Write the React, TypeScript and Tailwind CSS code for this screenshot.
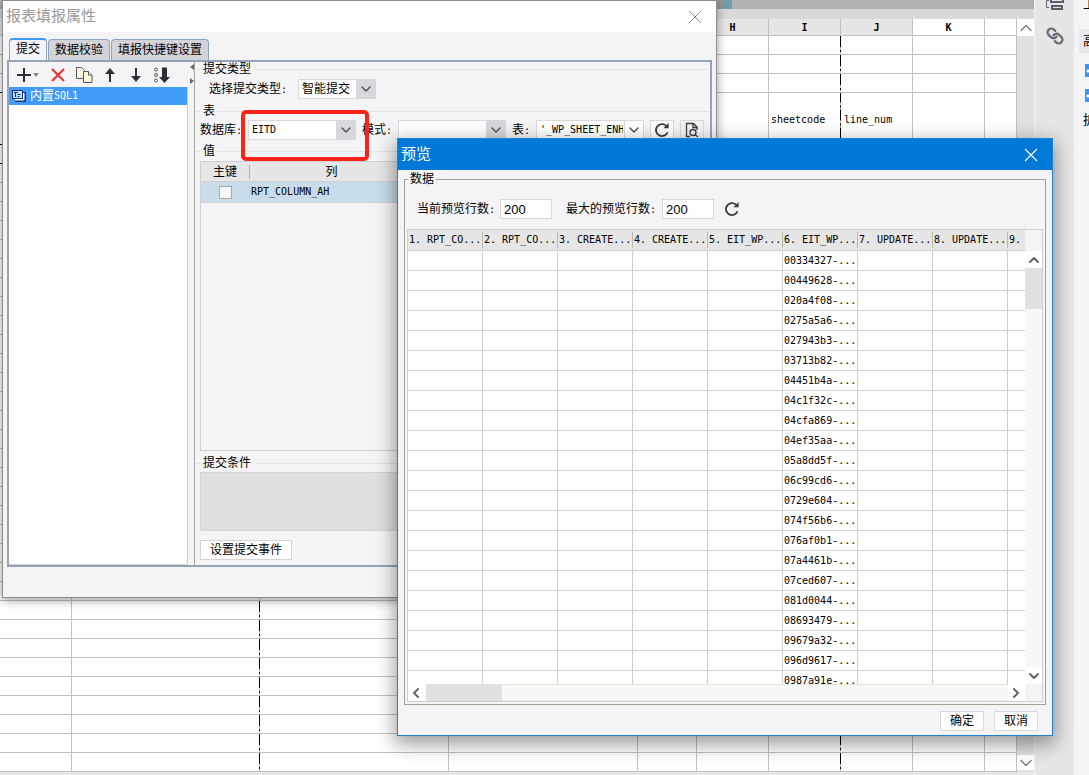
import type { ReactNode } from "react";
import { ChevronDown, ChevronLeft, ChevronRight, ChevronUp, Link } from "lucide-react";

const previewColumns = [
  "1. RPT_CO...",
  "2. RPT_CO...",
  "3. CREATE...",
  "4. CREATE...",
  "5. EIT_WP...",
  "6. EIT_WP...",
  "7. UPDATE...",
  "8. UPDATE...",
  "9.",
];

const previewIds = [
  "00334327", "00449628", "020a4f08", "0275a5a6", "027943b3", "03713b82", "04451b4a", "04c1f32c",
  "04cfa869", "04ef35aa", "05a8dd5f", "06c99cd6", "0729e604", "074f56b6", "076af0b1", "07a4461b",
  "07ced607", "081d0044", "08693479", "09679a32", "096d9617", "0987a91e",
];

const sheetColumns = ["", "", "", "", "", "H", "I", "J", "K", ""];
const sheetRows = [
  ...Array(3).fill("short"),
  "tall",
  ...Array(33).fill("short"),
];

function RefreshIcon() {
  return (
    <svg viewBox="0 0 16 16" className="h-4 w-4" fill="none" stroke="#3c3c40" strokeWidth="1.8">
      <path d="M13.6 10.2A6 6 0 1 1 12 3.6l1.2 1" />
      <path d="M14.6 1v5.2H9.4z" fill="#3c3c40" stroke="none" />
    </svg>
  );
}

function SheetCell({ row, column }: { row: number; column: number }) {
  // page break lines sit on the right of the 2nd and 7th columns
  const pageBreak = column === 1 || column === 6;
  const underlined = column === 0 && row >= 2 && row <= 4;
  let style = "border-r border-b border-[#c0c0c0] p-0 pt-0.5 pl-[3px]";
  if (pageBreak) {
    style =
      "border-b border-[#c0c0c0] bg-[linear-gradient(#000_0_11px,#c0c0c0_11px_14px,#000_14px_16px,#c0c0c0_16px)] bg-right bg-repeat-y p-0 pt-0.5 pl-0.5 [background-size:1px_18px]";
  }
  if (underlined) {
    style = "border-r border-b border-r-[#c0c0c0] border-b-black p-0";
  }
  return (
    <td className={style}>
      {row === 3 && column === 6 && "sheetcode"}
      {row === 3 && column === 7 && "line_num"}
    </td>
  );
}

function Sheet() {
  return (
    <div className="flex min-w-0 flex-1 flex-col">
      <div className="flex h-[9px] shrink-0 bg-[#b1b1b1] pl-[717px]">
        <div className="w-[6px] bg-[#999999]" />
        <div className="w-[9px] bg-[#6f9eaa]" />
      </div>
      <div className="h-[10px] shrink-0 bg-[#d9d9dc]" />
      <div className="flex min-h-0 flex-1">
        <div className="min-w-0 flex-1 overflow-hidden">
          <table className="w-full table-fixed border-separate border-spacing-0 font-['DejaVu_Sans_Mono','Noto_Sans_CJK_SC',monospace] text-[10px] leading-3">
            <colgroup>
              <col className="w-[72px]" />
              <col className="w-[188px]" />
              <col className="w-[189px]" />
              <col className="w-[189px]" />
              <col className="w-[59px]" />
              <col className="w-[72px]" />
              <col className="w-[72px]" />
              <col className="w-[72px]" />
              <col className="w-[72px]" />
              <col />
            </colgroup>
            <thead>
              <tr className="h-[17px]">
                {sheetColumns.map((name, i) => (
                  <th
                    key={i}
                    className={
                      i < 8
                        ? "border-r border-b border-[#c0c0c0] bg-[#e6e6e6] p-0 pt-px"
                        : "border-r border-b border-[#c0c0c0] bg-white p-0 pt-px"
                    }
                  >
                    {name}
                  </th>
                ))}
              </tr>
            </thead>
            <tbody>
              {sheetRows.map((kind, r) => (
                <tr key={r} className={kind === "tall" ? "h-[52px]" : "h-[19px]"}>
                  {sheetColumns.map((_, c) => (
                    <SheetCell key={c} row={r} column={c} />
                  ))}
                </tr>
              ))}
            </tbody>
          </table>
        </div>
        <div className="flex w-[17px] flex-col bg-[#e0e0e2] pb-0.5">
          <div className="flex h-[17px] items-center justify-center bg-white">
            <ChevronUp className="h-5 w-5 shrink-0 text-[#777]" strokeWidth={1.5} />
          </div>
          <div className="flex-1" />
          <div className="flex h-[15px] items-center justify-center bg-white">
            <ChevronDown className="h-5 w-5 shrink-0 text-[#777]" strokeWidth={1.5} />
          </div>
        </div>
      </div>
      <div className="h-[3px] shrink-0 bg-[#e6e6e8]" />
    </div>
  );
}

function SideBar() {
  return (
    <>
      <div className="flex w-10 shrink-0 flex-col items-center gap-4 border-l border-[#f4f4f4] bg-[#e6e6e6]">
        <svg viewBox="0 0 18 11" className="h-[11px] w-[18px]" fill="none" stroke="#5c5f68" strokeWidth="2">
          <path d="M5 0v2h12V0M6 6h10v3H6z" />
          <path d="M3 .5H.5v7H3" strokeWidth="1" />
        </svg>
        <Link className="h-[18px] w-[18px] -scale-x-100 text-[#696c74]" strokeWidth={3} />
      </div>
      <div className="flex w-[15px] shrink-0 flex-col overflow-hidden bg-[#f4f4f7] pl-[5px] text-[13px]">
        <div className="h-[29px] pl-1 leading-[8px]">上</div>
        <div className="h-6 bg-[#e9e9eb] pl-1 leading-6">高</div>
        <div className="flex flex-col gap-3 pt-[11px] pl-1.5">
          <input type="checkbox" defaultChecked aria-label="选项一" className="h-[13px] w-[13px] shrink-0 appearance-none bg-[#3a96f5] bg-[radial-gradient(circle_at_3px_7px,#fff_1px,transparent_2px)]" />
          <input type="checkbox" defaultChecked aria-label="选项二" className="h-[13px] w-[13px] shrink-0 appearance-none bg-[#3a96f5] bg-[radial-gradient(circle_at_3px_7px,#fff_1px,transparent_2px)]" />
        </div>
        <div className="pt-2 pl-1 leading-5">扩</div>
      </div>
    </>
  );
}

function GroupTitle({ children }: { children: ReactNode }) {
  return (
    <div className="-mx-[3px] flex h-[14px] shrink-0 items-center gap-0.5 whitespace-nowrap leading-[14px]">
      <span className="h-px w-1 bg-[#e4e4e7]" />
      {children}
      <span className="h-px flex-1 bg-[#e4e4e7]" />
    </div>
  );
}

function Colon() {
  return <span className="text-[10px]">:</span>;
}

function Select({ id, value, plain, narrow }: { id: string; value: string; plain?: boolean; narrow?: boolean }) {
  return (
    <div className={narrow ? "relative h-5 w-[78px]" : "relative h-5 w-[108px] text-[10px]"}>
      <select id={id} className="h-5 w-full appearance-none rounded-none border border-[#d9d9dc] bg-white py-0 pr-5 pl-[3px] outline-none">
        <option>{value}</option>
      </select>
      <span
        className={
          plain
            ? "pointer-events-none absolute top-0 right-0 flex h-5 w-5 items-center justify-center border border-[#d9d9dc] bg-white"
            : "pointer-events-none absolute top-0 right-0 flex h-5 w-5 items-center justify-center bg-[#d7d8db]"
        }
      >
        <ChevronDown className="h-4 w-4 shrink-0 text-[#4b4b4f]" strokeWidth={2} />
      </span>
    </div>
  );
}

function ToolBar() {
  return (
    <div className="flex h-[25px] items-center gap-[9px] pl-2 text-[#2f2f33]">
      <button aria-label="添加" className="flex items-center gap-0.5">
        <svg viewBox="0 0 14 14" className="h-[14px] w-[14px]" stroke="currentColor" strokeWidth="2">
          <path d="M7 0v14M0 7h14" />
        </svg>
        <svg viewBox="0 0 6 4" className="h-1 w-1.5" fill="#8a8a8a">
          <path d="M0 0h6L3 4z" />
        </svg>
      </button>
      <button aria-label="删除" className="ml-[3px]">
        <svg viewBox="0 0 14 14" className="h-[14px] w-[14px]" stroke="#e8392f" strokeWidth="2.2">
          <path d="M1 1l12 12M13 1L1 13" />
        </svg>
      </button>
      <button aria-label="复制" className="ml-0.5">
        <svg viewBox="0 0 17 16" className="h-4 w-[17px]" fill="#fdf6dc" stroke="#55565c">
          <path d="M.5.5h5l3 3v8h-8z" />
          <path d="M7.500 4.500h5l3.500 3.500v7.500H7.500z" />
          <path d="M12.500 4.500v3.500h3.500" />
        </svg>
      </button>
      <button aria-label="上移" className="ml-0.5">
        <svg viewBox="0 0 12 14" className="h-[14px] w-3">
          <path d="M6 4v10" stroke="currentColor" strokeWidth="2" />
          <path d="M6 0l5 6H1z" fill="currentColor" />
        </svg>
      </button>
      <button aria-label="下移" className="ml-[5px]">
        <svg viewBox="0 0 12 14" className="h-[14px] w-3">
          <path d="M6 0v10" stroke="currentColor" strokeWidth="2" />
          <path d="M6 14l5-6H1z" fill="currentColor" />
        </svg>
      </button>
      <button aria-label="排序" className="ml-[3px]">
        <svg viewBox="0 0 16 16" className="h-4 w-4">
          <g fill="none" stroke="#55565c">
            <circle cx="2" cy="2.500" r="1.500" />
            <circle cx="2" cy="8" r="1.500" />
            <circle cx="2" cy="13.500" r="1.500" />
          </g>
          <path d="M8 .5h5V10h3l-5.500 6L5 10h3z" fill="currentColor" />
        </svg>
      </button>
    </div>
  );
}

function PropertyWindow() {
  return (
    <div className="absolute top-0 left-[2px] w-[715px] border border-[#8c8c8c] bg-[#f4f4f7] shadow-[0_2px_10px_rgba(0,0,0,0.4)]">
      <div className="flex h-[31px] items-center justify-between bg-white pr-3.5 pl-[3px]">
        <h1 className="text-[15px] text-[#999]">报表填报属性</h1>
        <button aria-label="关闭">
          <svg viewBox="0 0 14 14" className="h-[14px] w-[14px]" stroke="#8c8c8c">
            <path d="M1 1l12 12M13 1L1 13" />
          </svg>
        </button>
      </div>
      <div className="px-1 pt-1.5 pb-[30px]">
        <div className="flex h-[22px] items-end gap-px pl-0.5">
          <button className="h-[22px] w-[38px] rounded-t-sm border border-t-2 border-b-0 border-[#8ea2bc] border-t-[#3f96f5] bg-[#f4f4f7] pb-0.5 leading-4">提交</button>
          <button className="h-[21px] w-[62px] rounded-t-sm border border-b-0 border-[#8ea2bc] bg-[#d3d3d8] leading-4">数据校验</button>
          <button className="h-[21px] w-[98px] rounded-t-sm border border-b-0 border-[#8ea2bc] bg-[#d3d3d8] leading-4">填报快捷键设置</button>
        </div>
        <div className="flex border-2 border-[#94a3b8]">
          <div className="flex w-[179px] shrink-0 flex-col">
            <ToolBar />
            <ul className="flex-1 border-r border-b border-[#d0d0d3] bg-white">
              <li className="flex h-[18px] items-center bg-[#419bf9] pl-[3px] leading-4 text-white">
                <svg viewBox="0 0 14 12" className="mr-1 h-3 w-[14px]">
                  <path d="M3 2h11v10H3z" fill="#12357c" />
                  <path d="M3 3h9.500v7.500H3z" fill="#fff" />
                  <path d="M0 0h11v9H0z" fill="#12357c" />
                  <path d="M1 1h9v7H1z" fill="#c3dcf7" />
                  <path d="M2 2.500h4M3.500 2.500V7M5.500 4.500h3M5.500 6.500h2" stroke="#12357c" />
                </svg>
                内置<span className="text-[10px]">SQL1</span>
              </li>
            </ul>
          </div>
          <div className="flex w-[7px] shrink-0 flex-col gap-2 border-r border-[#a5a5a0] pt-0.5 pl-0.5">
            <svg viewBox="0 0 4 6" className="h-1.5 w-1" fill="#666">
              <path d="M4 0v6L0 3z" />
            </svg>
            <svg viewBox="0 0 4 6" className="h-1.5 w-1" fill="#666">
              <path d="M0 0v6l4-3z" />
            </svg>
          </div>
          <div className="flex min-w-0 flex-1 flex-col px-[5px] pb-[5px]">
            <GroupTitle>提交类型</GroupTitle>
            <div className="mt-[3px] flex items-center pl-[9px]">
              <label htmlFor="submitType" className="w-[89px]">选择提交类型<Colon /></label>
              <Select id="submitType" value="智能提交" narrow />
            </div>
            <div className="mt-[5px]">
              <GroupTitle>表</GroupTitle>
            </div>
            <div className="mt-0.5 flex items-center whitespace-nowrap">
              <label htmlFor="database" className="w-12">数据库<Colon /></label>
              <Select id="database" value="EITD" />
              <label htmlFor="schema" className="ml-1.5 w-9">模式<Colon /></label>
              <Select id="schema" value="" />
              <label htmlFor="table" className="ml-1.5 w-6">表<Colon /></label>
              <Select id="table" value="'_WP_SHEET_ENH" plain />
              <button aria-label="刷新" className="ml-1.5 flex h-5 w-6 items-center justify-center border border-[#d9d9dc] bg-white">
                <RefreshIcon />
              </button>
              <button aria-label="预览" className="ml-1.5 flex h-5 w-6 items-center justify-center border border-[#d9d9dc]">
                <svg viewBox="0 0 14 16" className="h-4 w-[14px]" fill="none" stroke="#3c3c40" strokeWidth="1.3">
                  <path d="M5 14.500H1.500V1.500h7l3.500 3.500v3M8 1.500v4h4" />
                  <circle cx="8" cy="10.500" r="3" />
                  <path d="M10.200 12.700l2.800 2.300" />
                </svg>
              </button>
            </div>
            <div className="mt-1">
              <GroupTitle>值</GroupTitle>
            </div>
            <div className="mt-[3px] h-[290px] border border-[#d0d0d3]">
              <table className="w-full table-fixed border-separate border-spacing-0">
                <colgroup>
                  <col className="w-[49px]" />
                  <col className="w-[163px]" />
                  <col />
                </colgroup>
                <thead>
                  <tr className="h-5 bg-[#e6e6e6]">
                    <th className="border-b border-[#d0d0d3] p-0 font-normal">
                      <div className="border-r border-[#b5b5a8] leading-[14px]">主键</div>
                    </th>
                    <th className="border-b border-[#d0d0d3] p-0 font-normal">列</th>
                    <th className="border-b border-[#d0d0d3] p-0 font-normal">值</th>
                  </tr>
                </thead>
                <tbody>
                  <tr className="h-[21px] bg-[#c8dce9]">
                    <td className="border-r border-b border-[#d0d0d3] p-0">
                      <input type="checkbox" aria-label="主键" className="mx-auto block h-[13px] w-[13px] appearance-none border border-[#a8a8a8] bg-[#f7f7f7]" />
                    </td>
                    <td className="border-b border-[#d0d0d3] p-0 pl-px font-['DejaVu_Sans_Mono',monospace] text-[10px]">RPT_COLUMN_AH</td>
                    <td className="border-b border-[#d0d0d3] p-0" />
                  </tr>
                </tbody>
              </table>
            </div>
            <div className="mt-[5px]">
              <GroupTitle>提交条件</GroupTitle>
            </div>
            <div className="mt-0.5 h-[59px] border border-[#d4d4d6] bg-[#dfdfe1]" />
            <button className="mt-[9px] h-5 w-[92px] border border-[#d4d4d6] bg-white leading-4">设置提交事件</button>
          </div>
        </div>
      </div>
      <div className="pointer-events-none absolute top-[109px] left-[238px] h-[51px] w-32 rounded-[5px] border-4 border-[#fc2418]" />
    </div>
  );
}

function PreviewWindow() {
  return (
    <div className="absolute top-[138px] left-[397px] w-[656px] border border-[#1883d7] bg-[#f4f4f7] shadow-[0_6px_18px_2px_rgba(0,0,0,0.4)]">
      <div className="flex h-[31px] items-center justify-between bg-[#0078d7] pr-3.5 pl-[3px] text-white">
        <h2 className="text-[15px]">预览</h2>
        <button aria-label="关闭">
          <svg viewBox="0 0 14 14" className="h-[14px] w-[14px]" stroke="currentColor" strokeWidth="1.2">
            <path d="M1 1l12 12M13 1L1 13" />
          </svg>
        </button>
      </div>
      <div className="px-1.5 pt-0.5">
        <fieldset className="min-w-0 border border-[#a09f94] px-0.5 pb-0.5">
          <legend className="ml-px h-[14px] px-0.5 leading-[14px]">数据</legend>
          <div className="mt-[13px] flex h-5 items-center pl-2.5">
            <label htmlFor="currentRows" className="w-[83px]">当前预览行数<Colon /></label>
            <input id="currentRows" defaultValue="200" className="h-5 w-[52px] border border-[#d9d9dc] bg-white px-[3px] font-['Liberation_Sans',sans-serif] text-[13px]" />
            <label htmlFor="maxRows" className="ml-3.5 w-24">最大的预览行数<Colon /></label>
            <input id="maxRows" defaultValue="200" className="h-5 w-[52px] border border-[#d9d9dc] bg-white px-[3px] font-['Liberation_Sans',sans-serif] text-[13px]" />
            <button aria-label="刷新" className="ml-2.5">
              <RefreshIcon />
            </button>
          </div>
          <div className="mt-2.5 border border-[#cfcfd2]">
            <div className="flex h-[454px]">
              <div className="min-w-0 flex-1 overflow-hidden bg-white">
                <table className="w-[675px] table-fixed border-separate border-spacing-0 font-['DejaVu_Sans_Mono',monospace] text-[10px] whitespace-nowrap">
                  <thead>
                    <tr className="h-[21px] bg-[#e6e6e6]">
                      {previewColumns.map((name) => (
                        <th key={name} className="border-b border-[#d0d0d0] p-0 text-left font-normal">
                          <div className="border-r border-[#bcb9a4] pl-px leading-4">{name}</div>
                        </th>
                      ))}
                    </tr>
                  </thead>
                  <tbody>
                    {previewIds.map((id) => (
                      <tr key={id} className="h-5">
                        {previewColumns.map((name, c) => (
                          <td key={name} className="border-r border-b border-[#d0d0d0] p-0 pl-px leading-4">
                            {c === 5 && `${id}-...`}
                          </td>
                        ))}
                      </tr>
                    ))}
                  </tbody>
                </table>
              </div>
              <div className="flex w-[17px] flex-col bg-[#f8f8f6]">
                <div className="h-[21px] bg-[#f4f4f7]" />
                <div className="flex h-[17px] items-center justify-center bg-white">
                  <ChevronUp className="h-4 w-4 shrink-0 text-[#666]" strokeWidth={3} />
                </div>
                <div className="h-[41px] bg-[#e1e1e1]" />
                <div className="flex-1" />
                <div className="flex h-[17px] items-center justify-center bg-white">
                  <ChevronDown className="h-4 w-4 shrink-0 text-[#666]" strokeWidth={3} />
                </div>
              </div>
            </div>
            <div className="flex h-[17px] pr-[17px]">
              <div className="flex w-[18px] items-center bg-white">
                <ChevronLeft className="h-4 w-4 shrink-0 text-[#666]" strokeWidth={3} />
              </div>
              <div className="w-[76px] bg-[#e1e1e1]" />
              <div className="flex-1 border-y border-[#e8e6d8] bg-[#f8f8f6]" />
              <div className="flex w-[17px] items-center bg-white">
                <ChevronRight className="h-4 w-4 shrink-0 text-[#666]" strokeWidth={3} />
              </div>
            </div>
          </div>
        </fieldset>
      </div>
      <div className="flex justify-end gap-2.5 pt-1.5 pr-3.5 pb-1">
        <button className="h-5 w-11 border border-[#d9d9dc] bg-white leading-4">确定</button>
        <button className="h-5 w-11 border border-[#d9d9dc] bg-white leading-4">取消</button>
      </div>
    </div>
  );
}

export default function App() {
  return (
    <main className="relative flex h-screen overflow-hidden bg-white font-['DejaVu_Sans_Mono','Noto_Sans_CJK_SC',monospace] text-xs text-black">
      <Sheet />
      <SideBar />
      <PropertyWindow />
      <PreviewWindow />
    </main>
  );
}
